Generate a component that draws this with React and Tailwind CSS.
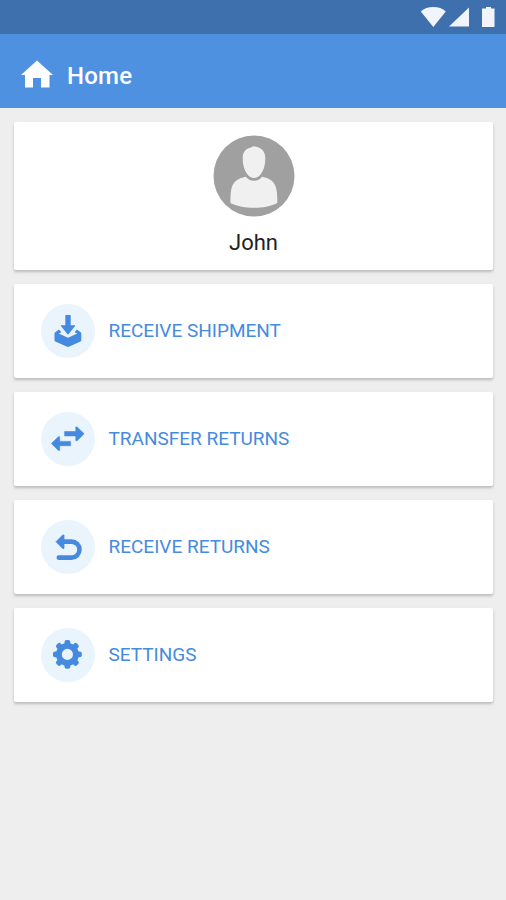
import { clsx } from "clsx";

function StatusBar() {
  return (
    <div className="flex h-[34px] items-start justify-end bg-[#3d70ad] pr-[10px] pt-[6px] text-[#f1f5fb]">
      <svg width="76" height="22" viewBox="0 0 76 22" fill="currentColor">
        <path d="M0.8 5.6C4 2.3 8.3 1 13.3 1s9.400 1.300 12.500 4.600L13.300 21Z" />
        <path d="M49 1.500V20.500H29Z" />
        <path d="M66 1h5v1.500h3.500V21H62V2.500h4Z" />
      </svg>
    </div>
  );
}

function Header({ title }) {
  return (
    <header className="flex h-[74px] items-center bg-[#4f91e1] pl-[20px] pt-[8px] text-white">
      <svg width="34" height="32" viewBox="0 0 34 32" fill="currentColor">
        <path d="M17 1.500L33 16h-3.500v12.500H21V19h-8v9.500H5V16H1Z" />
      </svg>
      <h1 className="ml-[13px] pt-[2px] text-[24px] font-medium leading-none tracking-[0.2px]">{title}</h1>
    </header>
  );
}

function Card({ children, className = "" }) {
  return (
    <section className={clsx("rounded-[2px] bg-white shadow-[0_2px_3px_rgba(0,0,0,0.22)]", className)}>
      {children}
    </section>
  );
}

function Avatar() {
  return (
    <svg width="82" height="82" viewBox="0 0 82 82">
      <circle cx="41" cy="41" r="40.500" fill="#a0a0a0" />
      <path
        fill="#f0f0f0"
        d="M41 11.200C47 12 52.300 15 52.300 23c0 7-1.500 12-4.600 16.300C45.700 42 43.500 43 41 43s-4.700-1-6.700-3.700C31.200 35 29.700 30 29.700 23c0-6 3-9 6.600-10 1.700-.4 3.200-1.600 4.700-1.800Z"
      />
      <path
        fill="#f0f0f0"
        d="M32.800 41.800C35 44.500 37.500 45.800 41 45.800s6-1.300 8.200-4c8 1.500 12.800 5 14.300 13 .6 3.500.8 7 .8 13.200C57 71.500 50 72.700 41 72.700s-16-1.200-23.600-4.700c0-6.200.2-9.700.8-13.200 1.500-8 6.600-11.500 14.600-13Z"
      />
    </svg>
  );
}

function ShipmentIcon() {
  return (
    <>
      <path d="M24.300 11.600q0-.6.600-.6h4.200q.6 0 .6.600v9.700h4.100q1 0 .3.800L27.700 30q-.7.700-1.400 0l-6.400-7.900q-.7-.8.300-.8h4.100Z" />
      <path
        fillRule="evenodd"
        d="M18 25.500L14.200 28.200q-.7.500-.7 1.300v6.700q0 .9.800 1.400l11.900 5.100q.8.300 1.600 0l11.700-5.100q.8-.5.8-1.400v-6.700q0-.8-.7-1.300L35.900 25.500 33.600 28.200 36.300 29.600 27 33.800 17.700 29.600 20.400 28.200Z"
      />
    </>
  );
}

function TransferIcon() {
  return (
    <g stroke="currentColor" strokeWidth="0.6" strokeLinejoin="round">
      <path d="M23.600 19.500h11.200v-4.600h1.300l7 6.900-7 6.900h-1.300v-4.800H23.600Z" />
      <path d="M29.600 29.400H18.700v-4.700h-1.300l-7 6.800 7 6.900h1.300v-4.700h10.900Z" />
    </g>
  );
}

function ReturnIcon() {
  return (
    <>
      <path
        d="M21 21.600h9.500a8 8 0 0 1 0 16H17.800"
        fill="none"
        stroke="currentColor"
        strokeWidth="4.600"
        strokeLinecap="round"
      />
      <path
        d="M15 21.700l6.700-6.700h1.300v13.400h-1.300Z"
        stroke="currentColor"
        strokeWidth="0.8"
        strokeLinejoin="round"
      />
    </>
  );
}

const teeth = [0, 45, 90, 135, 180, 225, 270, 315];

function SettingsIcon() {
  return (
    <>
      <circle cx="26.400" cy="26.400" r="8.500" fill="none" stroke="currentColor" strokeWidth="5.800" />
      {teeth.map((angle) => (
        <rect
          key={angle}
          x="23.500"
          y="12"
          width="5.800"
          height="6"
          rx="2"
          transform={`rotate(${angle} 26.400 26.400)`}
        />
      ))}
    </>
  );
}

function MenuItem({ label, icon: Icon }) {
  return (
    <Card>
      <button className="flex h-[94px] w-full items-center pl-[27px]">
        <svg width="54" height="54" viewBox="0 0 54 54" className="rounded-full bg-[#e9f4fd] text-[#458ade]" fill="currentColor">
          <Icon />
        </svg>
        <span className="ml-[13.500px] pb-px text-[19px] leading-none text-[#468bdd]">{label}</span>
      </button>
    </Card>
  );
}

const menu = [
  { label: "RECEIVE SHIPMENT", icon: ShipmentIcon },
  { label: "TRANSFER RETURNS", icon: TransferIcon },
  { label: "RECEIVE RETURNS", icon: ReturnIcon },
  { label: "SETTINGS", icon: SettingsIcon },
];

export default function App() {
  return (
    <div className="min-h-screen bg-[#eeeeee] font-[Roboto,sans-serif]">
      <StatusBar />
      <Header title="Home" />
      <main className="grid gap-[14px] pl-[14px] pr-[13px] pt-[14px]">
        <Card className="flex h-[148px] flex-col items-center pt-[13px]">
          <Avatar />
          <p className="mt-[15px] text-[22px] leading-none text-[#222222]">John</p>
        </Card>
        {menu.map((item) => (
          <MenuItem key={item.label} {...item} />
        ))}
      </main>
    </div>
  );
}
